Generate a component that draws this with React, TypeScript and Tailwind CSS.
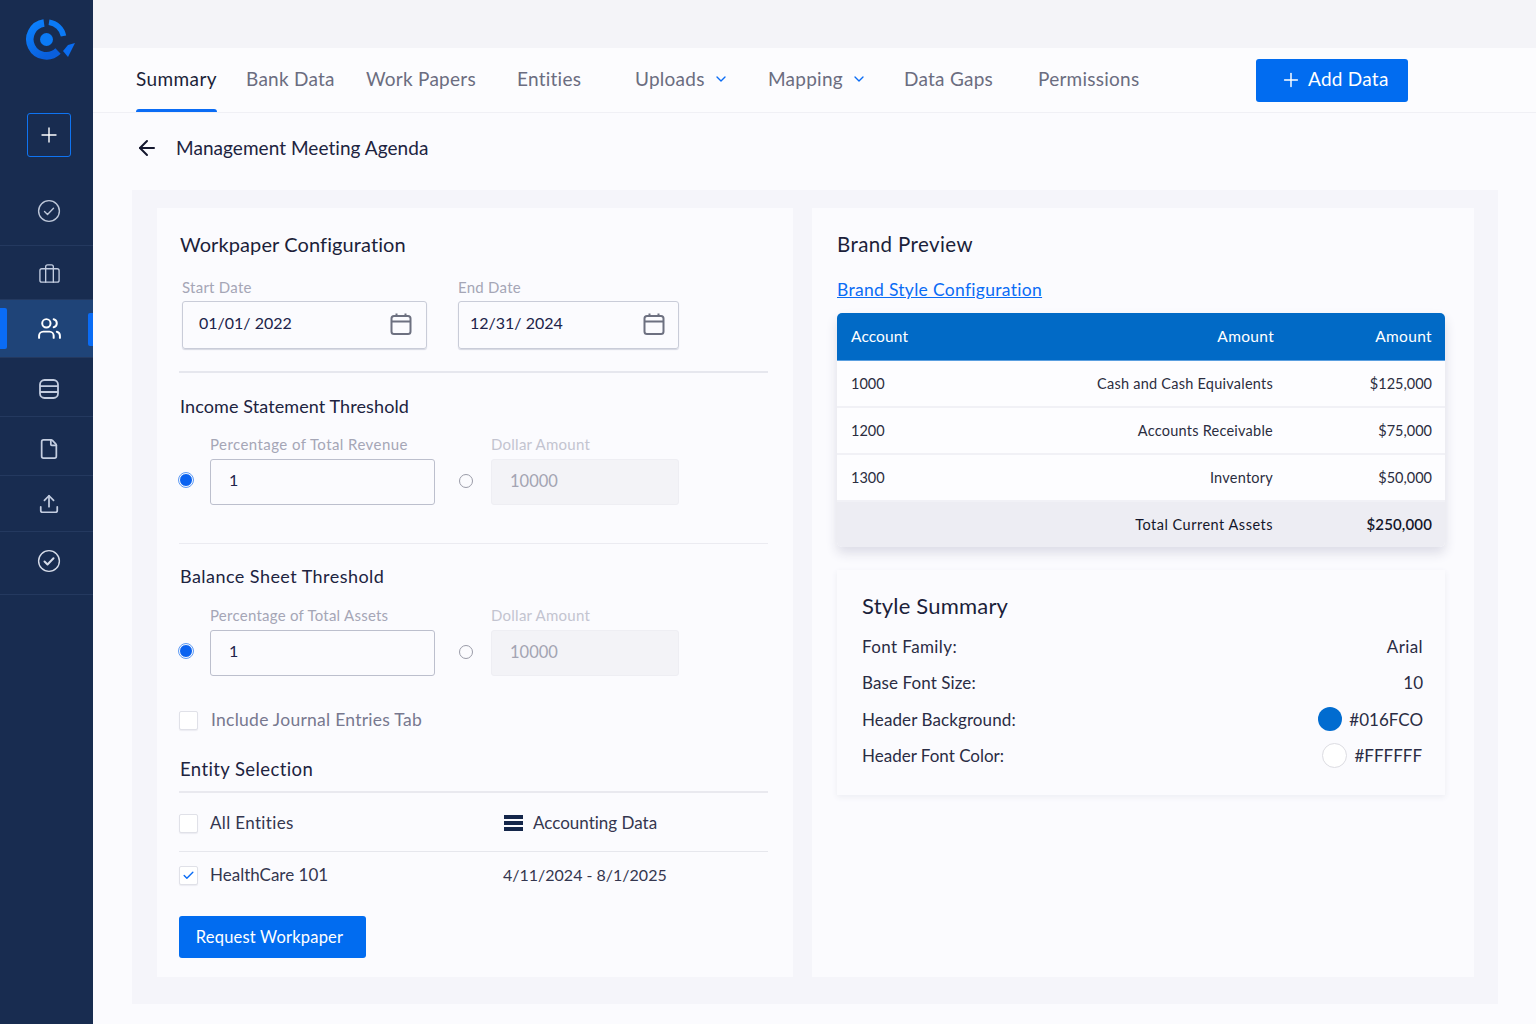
import { ArrowLeft, Briefcase, Check, ChevronDown, File, Plus, Upload, Users } from "lucide-react"
import type { ReactNode } from "react"

const Logo = () => (
    <svg width="52" height="44" viewBox="0 0 52 44" fill="none">
        <defs>
            <linearGradient id="ring" x1="0" y1="0" x2="0.6" y2="1">
                <stop offset="0" stopColor="#0b82ff" />
                <stop offset="1" stopColor="#0a5fdc" />
            </linearGradient>
        </defs>
        <path d="M20 6 A16.5 16.5 0 1 0 34 34" stroke="url(#ring)" strokeWidth="7.5" />
        <path d="M25 5.2 A17.5 17.5 0 0 1 39.5 19" stroke="#0b7af5" strokeWidth="5.5" />
        <circle cx="22.5" cy="22.5" r="6.5" fill="#0b7af5" />
        <path d="M51 26 L44 40 L39 34 L44 28 Z" fill="#0a6cf0" />
    </svg>
)

const CircleCheck = ({ bold }: { bold?: boolean }) => (
    <svg width="24" height="24" viewBox="0 0 24 24" fill="none" stroke={bold ? "#d5dbe8" : "#bcc6d8"} strokeWidth="1.4">
        <circle cx="12" cy="12" r="10.4" />
        <path d="M7.5 12.5l3 3 6-6.2" strokeWidth={bold ? 2 : 1.4} strokeLinecap="round" strokeLinejoin="round" />
    </svg>
)

const DbIcon = () => (
    <svg width="22" height="22" viewBox="0 0 22 22" fill="none" stroke="#c3cde0" strokeWidth="1.8">
        <rect x="2" y="2" width="18" height="18" rx="4.5" />
        <path d="M2 8.2h18M2 14h18" />
    </svg>
)

const CalendarIcon = () => (
    <svg width="24" height="24" viewBox="0 0 24 24" fill="none" stroke="#6d7080" strokeWidth="2" className="-mt-[2px]">
        <rect x="2.5" y="4" width="19" height="18" rx="2.5" />
        <path d="M2.5 9.5h19M7.5 1.5v3M16.5 1.5v3" />
    </svg>
)

const rows = [
    { h: "h-[54px] pt-[4px]", icon: <Briefcase size={23} strokeWidth={1.4} color="#c3cde0" /> },
    { h: "h-[58px] bg-[#1f4478]", icon: <Users size={25} strokeWidth={1.9} color="#ffffff" />, active: true },
    { h: "h-[59px] pt-[4px]", icon: <DbIcon /> },
    { h: "h-[59px] pt-[6px]", icon: <File size={22} strokeWidth={1.9} color="#c3cde0" /> },
    { h: "h-[56px]", icon: <Upload size={22} strokeWidth={1.9} color="#c3cde0" /> },
    { h: "h-[63px] pb-[4px]", icon: <CircleCheck bold /> },
]

const Sidebar = () => (
    <aside className="w-[93px] shrink-0 bg-[#182c50] flex flex-col">
        <div className="h-[113px] pt-[17px] pl-[24px]">
            <Logo />
        </div>
        <div className="ml-[27px] w-[44px] h-[44px] rounded-[3px] border border-[#0f74f2] flex items-center justify-center">
            <Plus size={24} strokeWidth={1.4} color="#ffffff" />
        </div>
        <div className="h-[89px] flex items-center justify-center border-b border-[#24395f] pt-[20px] pl-[5px]">
            <CircleCheck />
        </div>
        {rows.map((r, i) => (
            <div key={i} className={`relative flex items-center justify-center border-b border-[#24395f] pl-[5px] ${r.h}`}>
                {r.active && <span className="absolute left-0 top-[8px] w-[7px] h-[41px] rounded-r-[2px] bg-[#0a6cf5]" />}
                {r.active && <span className="absolute right-0 top-[13px] w-[5px] h-[33px] rounded-l-[2px] bg-[#0a6cf5]" />}
                {r.icon}
            </div>
        ))}
    </aside>
)

const tabs = [
    { label: "Bank Data", cls: "ml-[29px] w-[120px]" },
    { label: "Work Papers", cls: "w-[151px]" },
    { label: "Entities", cls: "w-[118px]" },
    { label: "Uploads", cls: "w-[133px]", chevron: true },
    { label: "Mapping", cls: "w-[136px]", chevron: true },
    { label: "Data Gaps", cls: "w-[134px]" },
    { label: "Permissions", cls: "w-[218px]" },
]

const TopTabs = () => (
    <div className="h-[65px] bg-[#fcfcfe] border-b border-[#f0f0f5] flex items-center pl-[43px] text-[19px] text-[#6b6d80] tracking-[0.25px]">
        <div className="h-full flex items-center relative text-[#1b1f38] w-[81px] pb-[2px] tracking-[0.4px]">
            Summary
            <span className="absolute left-0 right-0 bottom-0 h-[3px] rounded-t-sm bg-[#0a6cf5]" />
        </div>
        {tabs.map((t) => (
            <div key={t.label} className={`flex items-center gap-[8px] pb-[2px] ${t.cls}`}>
                {t.label}
                {t.chevron && <ChevronDown size={16} strokeWidth={2} color="#0a6cf5" />}
            </div>
        ))}
        <button className="w-[152px] h-[43px] rounded-[3px] bg-[#016cf0] text-white flex items-center pl-[24px] pb-[1px] gap-[6px]">
            <Plus size={22} strokeWidth={1.6} />
            Add Data
        </button>
    </div>
)

const Label = ({ children, light, cls = "tracking-[0.25px]" }: { children: ReactNode; light?: boolean; cls?: string }) => (
    <div className={`text-[15px] leading-[18px] ${cls} ${light ? "text-[#c3c4d0]" : "text-[#a5a6b6]"}`}>{children}</div>
)

const DateField = ({ label, value, w, pl }: { label: string; value: string; w: string; pl: string }) => (
    <div className={w}>
        <Label>{label}</Label>
        <div className={`mt-[5px] h-[48px] rounded-[3px] border border-[#c9ccd8] shadow-[0_1px_1px_#d5d7e2] flex items-center justify-between ${pl}`}>
            <span className="text-[16px] text-[#20234a] -mt-[4px]">{value}</span>
            <CalendarIcon />
        </div>
    </div>
)

const Radio = ({ on }: { on?: boolean }) =>
    on ? (
        <span className="w-[14px] h-[14px] rounded-full bg-[#0a62f0] border border-[#fff] outline outline-[#5f9bf5] shrink-0" />
    ) : (
        <span className="w-[14px] h-[14px] rounded-full border border-[#9a9ba8] shrink-0" />
    )

const Threshold = ({ title, label, gap, tr, labelTr }: { title: string; label: string; gap: string; tr: string; labelTr: string }) => (
    <div>
        <h3 className={`pl-[1px] text-[18px] leading-[24px] text-[#20233f] ${tr}`}>{title}</h3>
        <div className={`flex items-end ${gap}`}>
            <div className="w-[31px] h-[46px] flex items-center pb-[4px]">
                <Radio on />
            </div>
            <div className="w-[225px]">
                <Label cls={labelTr}>{label}</Label>
                <div className="mt-[6px] h-[46px] rounded-[3px] border border-[#bcbfcd] flex items-center pl-[18px] pb-[4px] text-[16px] text-[#20234a]">1</div>
            </div>
            <div className="w-[56px] h-[46px] flex items-center justify-center pl-[6px] pb-[3px]">
                <Radio />
            </div>
            <div className="w-[188px]">
                <Label light>Dollar Amount</Label>
                <div className="mt-[6px] h-[46px] rounded-[3px] border border-[#eeeef3] bg-[#f3f3f7] flex items-center pl-[18px] pb-[2px] text-[16.5px] text-[#a3a4b2]">10000</div>
            </div>
        </div>
    </div>
)

const Box = ({ checked }: { checked?: boolean }) => (
    <span className="w-[19px] h-[19px] rounded-[2px] border border-[#e0e1e8] bg-white shadow-[0_1px_1px_#ececf2] flex items-center justify-center shrink-0">
        {checked && <Check size={13} strokeWidth={2.6} color="#0a6cf5" />}
    </span>
)

const LeftCard = () => (
    <section className="w-[636px] h-[769px] bg-[#fbfbfe] pl-[22px] pr-[25px] pt-[23px]">
        <h2 className="text-[20px] leading-[26px] tracking-[0.1px] text-[#1c1f3a] pl-[1px]">Workpaper Configuration</h2>
        <div className="mt-[21px] ml-[3px] flex gap-[31px]">
            <DateField label="Start Date" value="01/01/ 2022" w="w-[245px]" pl="pl-[16px] pr-[13px]" />
            <DateField label="End Date" value="12/31/ 2024" w="w-[221px]" pl="pl-[11px] pr-[12px]" />
        </div>
        <div className="mt-[22px] h-[2px] bg-[#e6e7ee]" />
        <div className="mt-[21px]">
            <Threshold title="Income Statement Threshold" label="Percentage of Total Revenue" gap="mt-[17px]" tr="tracking-[0.1px]" labelTr="tracking-[0.43px]" />
        </div>
        <div className="mt-[38px] h-px bg-[#ebebf1]" />
        <div className="mt-[20px]">
            <Threshold title="Balance Sheet Threshold" label="Percentage of Total Assets" gap="mt-[18px]" tr="tracking-[0.45px]" labelTr="tracking-[0.25px]" />
        </div>
        <div className="mt-[33px] flex items-center gap-[13px] text-[17.5px] leading-[22px] tracking-[0.26px] text-[#77788f]">
            <Box />
            Include Journal Entries Tab
        </div>
        <h3 className="mt-[26px] pl-[1px] text-[18.5px] leading-[24px] tracking-[0.4px] text-[#20233f]">Entity Selection</h3>
        <div className="mt-[10px] h-[2px] bg-[#e9e9ef]" />
        <div className="h-[59px] pt-[2px] flex items-center border-b border-[#e6e7ed] text-[17px] text-[#34364f]">
            <div className="w-[325px] flex items-center gap-[12px] tracking-[0.35px]">
                <Box />
                All Entities
            </div>
            <div className="flex items-center gap-[10px]">
                <span className="w-[19px] h-[16px] flex flex-col justify-between">
                    <span className="h-[4px] bg-[#14264a]" />
                    <span className="h-[4px] bg-[#14264a]" />
                    <span className="h-[4px] bg-[#14264a]" />
                </span>
                Accounting Data
            </div>
        </div>
        <div className="h-[46px] flex items-center text-[17px] text-[#34364f]">
            <div className="w-[324px] flex items-center gap-[12px]">
                <Box checked />
                HealthCare 101
            </div>
            <div className="text-[16px]">4/11/2024 - 8/1/2025</div>
        </div>
        <button className="mt-[18px] w-[187px] h-[42px] pr-[6px] rounded-[3px] bg-[#016cf0] text-white text-[16.5px] tracking-[0.2px]">Request Workpaper</button>
    </section>
)

const tableRows = [
    ["1000", "Cash and Cash Equivalents", "$125,000"],
    ["1200", "Accounts Receivable", "$75,000"],
    ["1300", "Inventory", "$50,000"],
]

const BrandTable = () => (
    <div className="mt-[11px] w-[608px] rounded-[5px] bg-[#fdfdff] shadow-[0_6px_12px_#dcdce6] text-[14.5px] text-[#2b2d40]">
        <div className="h-[48px] rounded-t-[5px] bg-[#016ac6] text-white text-[15.5px] tracking-[0.35px] flex items-center justify-between pl-[14px] pr-[13px] border-b border-[#5a9fe0]">
            <span className="tracking-[0.1px]">Account</span>
            <div className="flex">
                <span className="mr-[101px]">Amount</span>
                <span>Amount</span>
            </div>
        </div>
        {tableRows.map((r) => (
            <div key={r[0]} className="h-[47px] flex items-center pl-[14px] pr-[13px] border-b-2 border-[#f1f1f6]">
                <span className="flex-1">{r[0]}</span>
                <span className="tracking-[0.24px]">{r[1]}</span>
                <span className="w-[159px] text-right">{r[2]}</span>
            </div>
        ))}
        <div className="h-[45px] rounded-b-[5px] bg-[#ededf3] flex items-center justify-end pr-[13px] text-[#14162a]">
            <span className="tracking-[0.5px]">Total Current Assets</span>
            <span className="w-[159px] text-right text-[15px] tracking-[0.15px] font-semibold">$250,000</span>
        </div>
    </div>
)

const StyleRow = ({ label, children, tr = "tracking-[0.1px]" }: { label: string; children: ReactNode; tr?: string }) => (
    <div className="h-[36.5px] flex items-center justify-between text-[17px] text-[#2a2c44]">
        <span className={tr}>{label}</span>
        {children}
    </div>
)

const RightCard = () => (
    <section className="w-[662px] h-[769px] bg-[#fbfbfe] pl-[25px] pt-[23px]">
        <h2 className="text-[20.5px] leading-[26px] tracking-[0.4px] text-[#1c1f3a]">Brand Preview</h2>
        <a className="block mt-[21px] text-[17.5px] leading-[24px] tracking-[0.3px] text-[#0a6cf5] underline">Brand Style Configuration</a>
        <BrandTable />
        <div className="mt-[23px] w-[608px] h-[225px] bg-[#fbfbfe] shadow-[0_2px_6px_#ecedf3] pl-[25px] pr-[22px] pt-[22px]">
            <h3 className="text-[22px] leading-[28px] tracking-[0.2px] text-[#1c1f3a] mb-[8px]">Style Summary</h3>
            <StyleRow label="Font Family:" tr="tracking-[0.4px]">
                <span className="tracking-[0.4px]">Arial</span>
            </StyleRow>
            <StyleRow label="Base Font Size:">
                <span>10</span>
            </StyleRow>
            <StyleRow label="Header Background:">
                <span className="flex items-center gap-[7px]">
                    <span className="w-[24px] h-[24px] rounded-full bg-[#016cd0]" />
                    #016FCO
                </span>
            </StyleRow>
            <StyleRow label="Header Font Color:" tr="tracking-[0px]">
                <span className="flex items-center gap-[7px] pr-[1px]">
                    <span className="w-[25px] h-[25px] rounded-full border border-[#dcdce2] bg-white" />
                    #FFFFFF
                </span>
            </StyleRow>
        </div>
    </section>
)

export default function App() {
    return (
        <div className="w-[1536px] h-[1024px] overflow-hidden flex bg-[#fbfbfe] font-['Lato',sans-serif] [font-variant-ligatures:none]">
            <Sidebar />
            <main className="flex-1 flex flex-col">
                <div className="h-[48px] bg-[#f4f4f8]" />
                <TopTabs />
                <div className="h-[78px] flex items-center pl-[42px] pb-[6px] gap-[17px] text-[19px] tracking-[0.05px] text-[#20233f] -mt-[1px]">
                    <ArrowLeft size={24} strokeWidth={2} color="#14172e" />
                    Management Meeting Agenda
                </div>
                <div className="ml-[39px] w-[1366px] h-[814px] bg-[#f5f5fa] pt-[18px] pl-[25px] flex gap-[19px]">
                    <LeftCard />
                    <RightCard />
                </div>
            </main>
        </div>
    )
}
